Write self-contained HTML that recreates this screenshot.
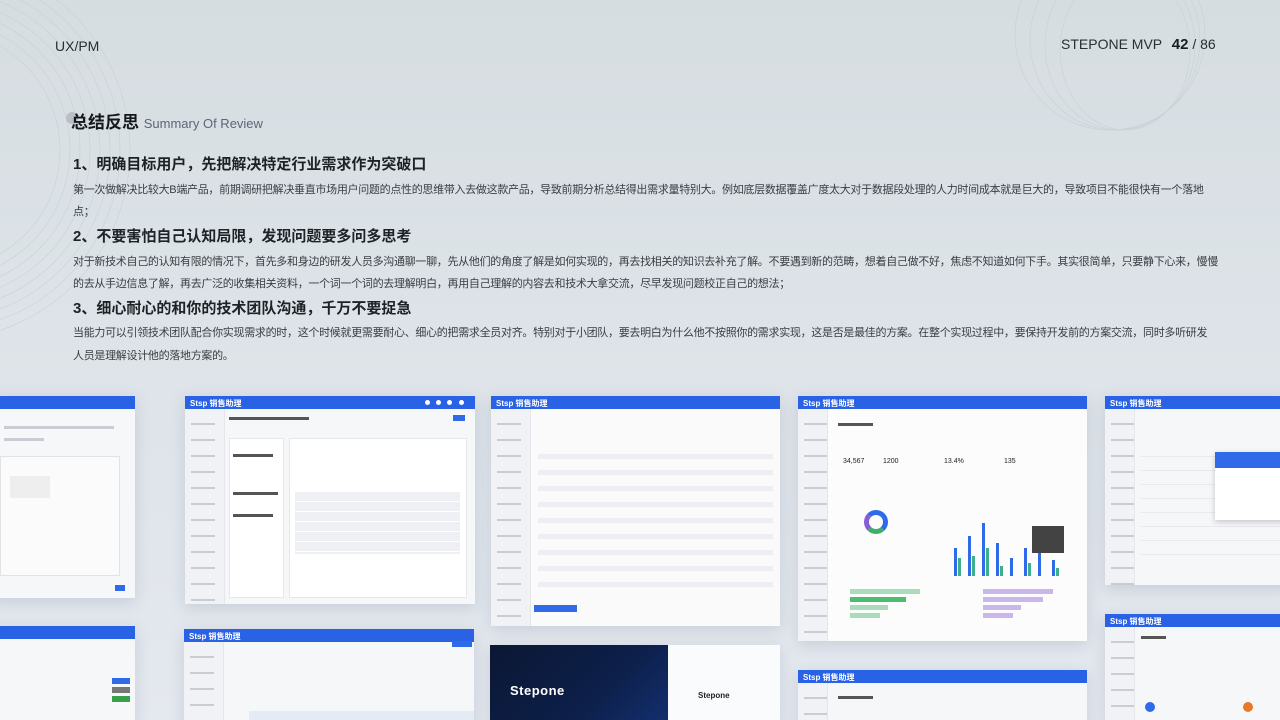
<!DOCTYPE html>
<html><head><meta charset="utf-8"><style>
*{margin:0;padding:0;box-sizing:border-box}
html,body{width:1280px;height:720px;overflow:hidden}
body{position:relative;font-family:"Liberation Sans","Noto Sans CJK SC",sans-serif;background:linear-gradient(180deg,#d6dde1 0%,#dde3e8 45%,#e4e8ef 100%);color:#333}
.abs{position:absolute}
.t{position:absolute;left:73px;font-size:11px;color:#3a3d42;white-space:nowrap;letter-spacing:-0.3px}
.h{position:absolute;left:73px;font-size:15px;font-weight:bold;color:#1e2226}
.card{position:absolute;background:#f6f7f9;box-shadow:0 4px 14px rgba(80,95,120,.18);overflow:hidden}
.bar{position:absolute;left:0;right:0;top:0;height:13px;background:#2a62e6}
.side{position:absolute;left:0;top:13px;bottom:0;width:40px;background:#f1f2f5;border-right:1px solid #e4e6ea;background-image:repeating-linear-gradient(180deg,transparent 0 10px,#c9ccd3 10px 12px,transparent 12px 16px);background-size:24px 100%;background-position:6px 4px;background-repeat:no-repeat}
.ln{position:absolute;height:3px;background:#c9ccd3}
.bl{position:absolute;background:#2f6ae8}
.logo{position:absolute;left:5px;top:2px;color:#fff;font-size:8px;font-weight:bold}
.dot{position:absolute;top:4px;width:5px;height:5px;border-radius:50%;background:#fff}
</style></head><body>
<svg class="abs" style="left:0;top:0" width="1280" height="400">
<g fill="none" stroke="#c2cad0" stroke-width="0.6" opacity="0.7">
<circle cx="-60" cy="150" r="120"/><circle cx="-60" cy="150" r="130"/><circle cx="-60" cy="150" r="140"/><circle cx="-60" cy="150" r="150"/><circle cx="-60" cy="150" r="160"/><circle cx="-60" cy="150" r="170"/><circle cx="-60" cy="150" r="180"/><circle cx="-60" cy="150" r="190"/>
<ellipse cx="1125" cy="50" rx="65" ry="80"/><ellipse cx="1120" cy="45" rx="75" ry="85"/><ellipse cx="1115" cy="40" rx="85" ry="90"/><ellipse cx="1110" cy="35" rx="95" ry="95"/>
</g></svg>
<div class="abs" style="left:55px;top:38px;font-size:14px;color:#2a2e33">UX/PM</div>
<div class="abs" style="left:1061px;top:36px;font-size:14px;color:#2a2e33">STEPONE MVP <b style="margin-left:6px;font-size:15px;color:#1a1d22">42</b> / 86</div>
<div class="abs" style="left:66px;top:112px;width:12px;height:12px;border-radius:50%;background:#b8bfc5"></div>
<div class="abs" style="left:71px;top:108px;font-size:17px;font-weight:bold;color:#15181c">总结反思 <span style="font-weight:normal;font-size:13px;color:#5c6675">Summary Of Review</span></div>
<div class="h" style="top:153px">1、明确目标用户，先把解决特定行业需求作为突破口</div>
<div class="t" style="top:181px">第一次做解决比较大B端产品，前期调研把解决垂直市场用户问题的点性的思维带入去做这款产品，导致前期分析总结得出需求量特别大。例如底层数据覆盖广度太大对于数据段处理的人力时间成本就是巨大的，导致项目不能很快有一个落地</div>
<div class="t" style="top:203px">点；</div>
<div class="h" style="top:225px">2、不要害怕自己认知局限，发现问题要多问多思考</div>
<div class="t" style="top:253px">对于新技术自己的认知有限的情况下，首先多和身边的研发人员多沟通聊一聊，先从他们的角度了解是如何实现的，再去找相关的知识去补充了解。不要遇到新的范畴，想着自己做不好，焦虑不知道如何下手。其实很简单，只要静下心来，慢慢</div>
<div class="t" style="top:275px">的去从手边信息了解，再去广泛的收集相关资料，一个词一个词的去理解明白，再用自己理解的内容去和技术大拿交流，尽早发现问题校正自己的想法；</div>
<div class="h" style="top:297px">3、细心耐心的和你的技术团队沟通，千万不要捉急</div>
<div class="t" style="top:324px">当能力可以引领技术团队配合你实现需求的时，这个时候就更需要耐心、细心的把需求全员对齐。特别对于小团队，要去明白为什么他不按照你的需求实现，这是否是最佳的方案。在整个实现过程中，要保持开发前的方案交流，同时多听研发</div>
<div class="t" style="top:347px">人员是理解设计他的落地方案的。</div>

<!-- row 1 -->
<div class="card" style="left:-10px;top:396px;width:145px;height:202px"><div class="bar"></div>
<div class="ln" style="left:14px;top:30px;width:110px"></div><div class="ln" style="left:14px;top:42px;width:40px"></div>
<div class="abs" style="left:10px;top:60px;width:120px;height:120px;border:1px solid #e1e3e7;background:#fbfbfc"></div>
<div class="abs" style="left:20px;top:80px;width:40px;height:22px;background:#eee;"></div>
<div class="bl" style="left:125px;top:189px;width:10px;height:6px"></div></div>
<div class="card" style="left:185px;top:396px;width:290px;height:208px"><div class="bar"></div><div class="logo">Stsp 销售助理</div>
<div class="dot" style="left:240px"></div><div class="dot" style="left:251px"></div><div class="dot" style="left:262px"></div><div class="dot" style="left:274px"></div>
<div class="side"></div>
<div class="ln" style="left:44px;top:21px;width:80px;background:#555"></div>
<div class="bl" style="left:268px;top:19px;width:12px;height:6px"></div>
<div class="abs" style="left:44px;top:42px;width:55px;height:160px;background:#fff;border:1px solid #e6e8ec"></div>
<div class="abs" style="left:104px;top:42px;width:178px;height:160px;background:#fff;border:1px solid #e6e8ec"></div>
<div class="abs" style="left:110px;top:96px;width:165px;height:62px;background:repeating-linear-gradient(180deg,#eef0f3 0 9px,#fff 9px 10px)"></div>
<div class="ln" style="left:48px;top:58px;width:40px;background:#555"></div><div class="ln" style="left:48px;top:96px;width:45px;background:#555"></div><div class="ln" style="left:48px;top:118px;width:40px;background:#555"></div></div>
<div class="card" style="left:491px;top:396px;width:289px;height:230px;background:#fafafb"><div class="bar"></div><div class="logo">Stsp 销售助理</div>
<div class="side"></div>
<div class="abs" style="left:47px;top:50px;width:235px;height:150px;background:repeating-linear-gradient(180deg,transparent 0 8px,#eceef1 8px 13px,transparent 13px 16px)"></div>
<div class="bl" style="left:43px;top:209px;width:43px;height:7px"></div></div>
<div class="card" style="left:798px;top:396px;width:289px;height:245px;background:#fcfcfd"><div class="bar"></div><div class="logo">Stsp 销售助理</div>
<div class="side" style="width:30px"></div>
<div class="ln" style="left:40px;top:27px;width:35px;background:#555"></div>
<div class="abs" style="left:45px;top:62px;font-size:7px;color:#222">34,567</div><div class="abs" style="left:85px;top:62px;font-size:7px;color:#222">1200</div><div class="abs" style="left:146px;top:62px;font-size:7px;color:#222">13.4%</div><div class="abs" style="left:206px;top:62px;font-size:7px;color:#222">135</div>
<div class="abs" style="left:66px;top:114px;width:24px;height:24px;border-radius:50%;border:5px solid #2f6ae8;border-left-color:#8a5cd6;border-bottom-color:#3fae6a"></div>
<svg class="abs" style="left:150px;top:122px" width="130" height="60"><g fill="#2f6ae8"><rect x="6" y="30" width="3" height="28"/><rect x="20" y="18" width="3" height="40"/><rect x="34" y="5" width="3" height="53"/><rect x="48" y="25" width="3" height="33"/><rect x="62" y="40" width="3" height="18"/><rect x="76" y="30" width="3" height="28"/><rect x="90" y="35" width="3" height="23"/><rect x="104" y="42" width="3" height="16"/></g><g fill="#3fae8a"><rect x="10" y="40" width="3" height="18"/><rect x="24" y="38" width="3" height="20"/><rect x="38" y="30" width="3" height="28"/><rect x="52" y="48" width="3" height="10"/><rect x="80" y="45" width="3" height="13"/><rect x="108" y="50" width="3" height="8"/></g><rect x="84" y="8" width="32" height="27" fill="#222" opacity=".85"/></svg>
<div class="abs" style="left:52px;top:193px;width:70px;height:5px;background:#a9dcba"></div><div class="abs" style="left:52px;top:201px;width:56px;height:5px;background:#4dbb70"></div><div class="abs" style="left:52px;top:209px;width:38px;height:5px;background:#a9dcba"></div><div class="abs" style="left:52px;top:217px;width:30px;height:5px;background:#a9dcba"></div>
<div class="abs" style="left:185px;top:193px;width:70px;height:5px;background:#c9b6ea"></div><div class="abs" style="left:185px;top:201px;width:60px;height:5px;background:#c9b6ea"></div><div class="abs" style="left:185px;top:209px;width:38px;height:5px;background:#c9b6ea"></div><div class="abs" style="left:185px;top:217px;width:30px;height:5px;background:#c9b6ea"></div></div>
<div class="card" style="left:1105px;top:396px;width:185px;height:189px"><div class="bar"></div><div class="logo">Stsp 销售助理</div>
<div class="side" style="width:30px"></div>
<div class="abs" style="left:36px;top:50px;width:140px;height:120px;background:repeating-linear-gradient(180deg,transparent 0 10px,#e8eaee 10px 11px,transparent 11px 14px)"></div>
<div class="abs" style="left:110px;top:56px;width:70px;height:68px;background:#fff;box-shadow:0 2px 6px rgba(0,0,0,.2)"><div class="bl" style="left:0;top:0;width:70px;height:16px"></div></div></div>

<!-- row 2 -->
<div class="card" style="left:-10px;top:626px;width:145px;height:100px"><div class="bar"></div>
<div class="bl" style="left:122px;top:52px;width:18px;height:6px"></div><div class="abs" style="left:122px;top:61px;width:18px;height:6px;background:#777"></div><div class="abs" style="left:122px;top:70px;width:18px;height:6px;background:#3a9f4c"></div></div>
<div class="card" style="left:184px;top:629px;width:290px;height:100px"><div class="bar"></div><div class="logo">Stsp 销售助理</div>
<div class="side"></div>
<div class="abs" style="left:65px;top:82px;width:225px;height:12px;background:#e4ebf5"></div>
<div class="bl" style="left:268px;top:12px;width:20px;height:6px"></div></div>
<div class="card" style="left:490px;top:645px;width:290px;height:80px;background:#fafbfc">
<div class="abs" style="left:0;top:0;width:178px;height:80px;background:linear-gradient(135deg,#0b1733,#0d1f4a 60%,#123070)"></div>
<div class="abs" style="left:20px;top:38px;color:#fff;font-size:13px;font-weight:bold;letter-spacing:.5px">Stepone</div>
<div class="abs" style="left:208px;top:46px;color:#222;font-size:8px;font-weight:bold">Stepone</div></div>
<div class="card" style="left:798px;top:670px;width:289px;height:60px"><div class="bar"></div><div class="logo">Stsp 销售助理</div>
<div class="side" style="width:30px"></div><div class="ln" style="left:40px;top:26px;width:35px;background:#555"></div></div>
<div class="card" style="left:1105px;top:614px;width:185px;height:110px"><div class="bar"></div><div class="logo">Stsp 销售助理</div>
<div class="side" style="width:30px"></div><div class="ln" style="left:36px;top:22px;width:25px;background:#555"></div>
<div class="abs" style="left:138px;top:88px;width:10px;height:10px;border-radius:50%;background:#e8782a"></div>
<div class="abs" style="left:40px;top:88px;width:10px;height:10px;border-radius:50%;background:#2f6ae8"></div></div>
</body></html>
